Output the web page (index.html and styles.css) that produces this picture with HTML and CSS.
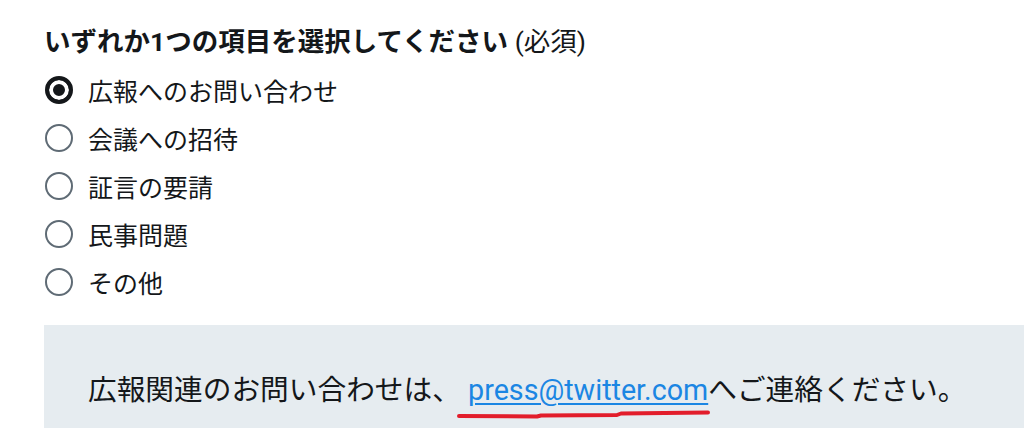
FILE: index.html
```html
<!DOCTYPE html>
<html lang="ja">
<head>
    <meta charset="UTF-8">
    <meta name="viewport" content="width=device-width, initial-scale=1.0">
    <title>お問い合わせ</title>
    <link rel="stylesheet" href="styles.css">
</head>
<body>
    <div class="container">
        <fieldset class="topic-group">
            <legend class="topic-title">いずれか1つの項目を選択してください <span class="required">(必須)</span></legend>
            <label class="topic-option">
                <input type="radio" name="topic" value="press" checked>
                <span>広報へのお問い合わせ</span>
            </label>
            <label class="topic-option">
                <input type="radio" name="topic" value="meeting">
                <span>会議への招待</span>
            </label>
            <label class="topic-option">
                <input type="radio" name="topic" value="testimony">
                <span>証言の要請</span>
            </label>
            <label class="topic-option">
                <input type="radio" name="topic" value="civil">
                <span>民事問題</span>
            </label>
            <label class="topic-option">
                <input type="radio" name="topic" value="other">
                <span>その他</span>
            </label>
        </fieldset>

        <div class="notice">
            <p>広報関連のお問い合わせは、 <span class="mark"><a href="mailto:press@twitter.com">press@twitter.com</a><svg class="mark-line" width="260" height="14" viewBox="0 0 260 14"><path d="M2 10 L80 10.5 L84 9.5 L160 9 L164 7.5 L251 6.5" fill="none" stroke="#e21d2b" stroke-width="4" stroke-linecap="round" stroke-linejoin="round"/></svg></span>へご連絡ください。</p>
        </div>
    </div>
</body>
</html>
```

FILE: styles.css
```css
/* page basics */
body {
    margin: 0;
    font-family: Roboto, "Noto Sans CJK JP", sans-serif;
    color: #14171a;
    background-color: #fff;
    overflow: hidden;
}

.container {
    padding: 18px 0 0 44px;
}

.topic-group {
    margin: 0;
    padding: 0;
    border: none;
}

.topic-title {
    padding: 0;
    height: 48px;
    line-height: 48px;
    font-size: 26.5px;
    font-weight: bold;
}

.required {
    font-weight: normal;
}

.topic-option {
    display: flex;
    align-items: center;
    gap: 15px;
    height: 48px;
    font-size: 25px;
    cursor: pointer;
}

.topic-option input {
    appearance: none;
    -webkit-appearance: none;
    width: 28px;
    height: 28px;
    margin: 0 0 0 1px;
    border: 2px solid #5f6b75;
    border-radius: 50%;
    background-color: #fff;
    flex-shrink: 0;
}

.topic-option input:checked {
    border: 4px solid #14171a;
    background-color: #14171a;
    box-shadow: inset 0 0 0 4px #fff;
}

.notice {
    margin-top: 19px;
    padding: 45px 0 37px 44px;
    background-color: #e6ecf0;
}

.notice p {
    margin: 0;
    font-size: 28.7px;
    line-height: 40px;
}

.mark {
    position: relative;
}

.notice a {
    color: #1b86e3;
    text-decoration: underline;
    text-decoration-thickness: 2px;
    text-underline-offset: 3px;
}

.mark-line {
    position: absolute;
    left: -11px;
    top: 33px;
}
```
